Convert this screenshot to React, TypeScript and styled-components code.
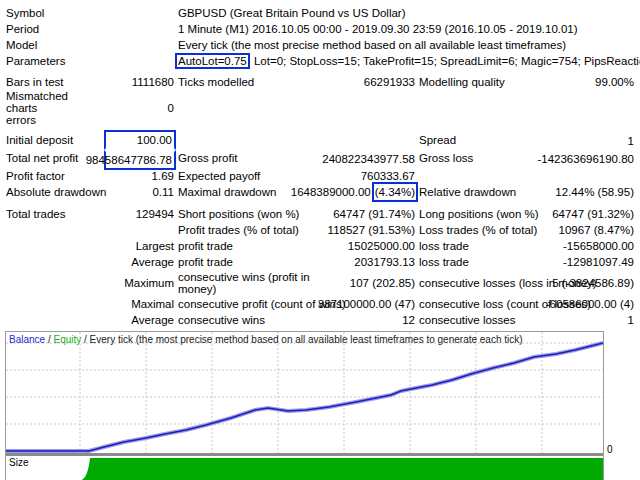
import styled, { createGlobalStyle } from 'styled-components';

const GlobalStyle = createGlobalStyle`
  body {
    margin: 0;
    background: #fff;
    font-family: 'Liberation Sans Narrow', 'Liberation Sans', sans-serif;
    font-size: 11px;
    color: #000;
  }
`;

const Page = styled.div`
  width: 640px;
  height: 480px;
  overflow: hidden;
  padding-top: 5px;
`;

const Table = styled.div<{ $mt?: number }>`
  display: grid;
  grid-template-columns: 100px 72px 150px 91px 123px 96px;
  margin-left: 4px;
  margin-top: ${({ $mt }) => $mt || 0}px;
  font-family: 'Liberation Sans Narrow', 'Liberation Sans', sans-serif;
  font-size: 11.5px;
  line-height: 16px;
`;

const Label = styled.div<{ $span?: number; $right?: boolean }>`
  grid-column: span ${({ $span }) => $span || 1};
  white-space: nowrap;
  text-align: ${({ $right }) => ($right ? 'right' : 'left')};
  padding-right: ${({ $right }) => ($right ? 2 : 0)}px;
  padding-left: ${({ $right }) => ($right ? 0 : 2)}px;
`;

const Wrap = styled.div`
  line-height: 12px;
  padding: 0 2px;
  display: flex;
  align-items: center;
  min-height: 26px;
`;

const Value = styled.div<{ $box?: 'top' | 'bottom' }>`
  text-align: right;
  white-space: nowrap;
  padding-right: 2px;
  display: flex;
  align-items: center;
  justify-content: flex-end;
  border: 2px solid ${({ $box }) => ($box ? '#0a2fd6' : 'transparent')};
  border-top-color: ${({ $box }) => ($box === 'top' ? '#0a2fd6' : 'transparent')};
  border-bottom-color: ${({ $box }) => ($box === 'bottom' ? '#0a2fd6' : 'transparent')};
  margin: ${({ $box }) => ($box === 'top' ? '-2px 0 0' : $box === 'bottom' ? '0 0 -2px' : '0')};
  border-width: ${({ $box }) => ($box ? '2px' : '0')};
`;

const Boxed = styled.span`
  border: 2px solid #0a2fd6;
  padding: 0 1px;
  margin: -2px 1px -2px -3px;
`;

const ChartWrap = styled.div`
  display: flex;
  margin: 3px 0 0 5px;
`;

const Frame = styled.div`
  width: 597px;
  border: 1px solid #9a9a9a;
  display: flex;
  flex-direction: column;
`;

const MainChart = styled.div`
  position: relative;
  height: 121px;
`;

const Legend = styled.div`
  position: absolute;
  top: 2px;
  left: 3px;
  font-size: 10px;
  font-family: 'Liberation Sans Narrow', 'Liberation Sans', sans-serif;
  color: #222;
  white-space: nowrap;
`;

const Colored = styled.span<{ $c: string }>`
  color: ${({ $c }) => $c};
`;

const Divider = styled.div`
  height: 3px;
  background: #8c8c8c;
`;

const SizePanel = styled.div`
  position: relative;
  height: 26px;
`;

const SizeLabel = styled.span`
  position: absolute;
  top: 1px;
  left: 3px;
  font-size: 10px;
  font-family: 'Liberation Sans Narrow', 'Liberation Sans', sans-serif;
`;

const Side = styled.div`
  width: 30px;
  font-size: 10px;
  font-family: 'Liberation Sans Narrow', sans-serif;
  padding: 113px 0 0 3px;
`;

const Axis = styled.div`
  display: flex;
  justify-content: space-between;
  width: 596px;
  margin: 1px 0 0 6px;
  font-size: 9px;
  letter-spacing: -0.2px;
  font-family: 'Liberation Sans Narrow', 'Liberation Sans', sans-serif;
  white-space: nowrap;
`;

const ticks = ['0', '6046', '11421', '16796', '22170', '27545', '32919', '38294', '43669', '49043', '54418', '59792', '65167', '70541', '75916', '81291', '86665', '92040', '97414', '102789', '108164', '113538', '118913', '124287', '129662'];

const linePts = '0,119 83,119 98,115 118,110 140,106 159,102 180,98 200,93 225,86 249,78 262,76 282,79 300,78 323,75 350,70 370,66 385,63 395,59 405,57 426,53 446,48 465,42 487,36 508,31 528,25 550,22 569,18 585,14 597,11';

export default function App() {
  return (
    <Page>
      <GlobalStyle />
      <Table>
        <Label $span={2}>Symbol</Label>
        <Label $span={4}>GBPUSD (Great Britain Pound vs US Dollar)</Label>
        <Label $span={2}>Period</Label>
        <Label $span={4}>1 Minute (M1) 2016.10.05 00:00 - 2019.09.30 23:59 (2016.10.05 - 2019.10.01)</Label>
        <Label $span={2}>Model</Label>
        <Label $span={4}>Every tick (the most precise method based on all available least timeframes)</Label>
        <Label $span={2}>Parameters</Label>
        <Label $span={4}>
          <Boxed>AutoLot=0.75</Boxed> Lot=0; StopLoss=15; TakeProfit=15; SpreadLimit=6; Magic=754; PipsReaction=1.2;
        </Label>
      </Table>
      <Table $mt={5}>
        <Label>Bars in test</Label>
        <Value>1111680</Value>
        <Label>Ticks modelled</Label>
        <Value>66291933</Value>
        <Label>Modelling quality</Label>
        <Value>99.00%</Value>
        <Wrap>Mismatched charts<br />errors</Wrap>
        <Value>0</Value>
        <Label $span={4} />
      </Table>
      <Table $mt={6}>
        <Label>Initial deposit</Label>
        <Value $box="top">100.00</Value>
        <Label />
        <Value />
        <Label>Spread</Label>
        <Value>1</Value>
        <Label>Total net profit</Label>
        <Value $box="bottom">98458647786.78</Value>
        <Label>Gross profit</Label>
        <Value>240822343977.58</Value>
        <Label>Gross loss</Label>
        <Value>-142363696190.80</Value>
        <Label>Profit factor</Label>
        <Value>1.69</Value>
        <Label>Expected payoff</Label>
        <Value>760333.67</Value>
        <Label $span={2} />
        <Label>Absolute drawdown</Label>
        <Value>0.11</Value>
        <Label>Maximal drawdown</Label>
        <Value>1648389000.00 <Boxed style={{ marginRight: -3, marginLeft: 1 }}>(4.34%)</Boxed></Value>
        <Label>Relative drawdown</Label>
        <Value>12.44% (58.95)</Value>
      </Table>
      <Table $mt={6}>
        <Label>Total trades</Label>
        <Value>129494</Value>
        <Label>Short positions (won %)</Label>
        <Value>64747 (91.74%)</Value>
        <Label>Long positions (won %)</Label>
        <Value>64747 (91.32%)</Value>
        <Label $span={2} />
        <Label>Profit trades (% of total)</Label>
        <Value>118527 (91.53%)</Value>
        <Label>Loss trades (% of total)</Label>
        <Value>10967 (8.47%)</Value>
        <Label />
        <Label $right>Largest</Label>
        <Label>profit trade</Label>
        <Value>15025000.00</Value>
        <Label>loss trade</Label>
        <Value>-15658000.00</Value>
        <Label />
        <Label $right>Average</Label>
        <Label>profit trade</Label>
        <Value>2031793.13</Value>
        <Label>loss trade</Label>
        <Value>-12981097.49</Value>
        <Label />
        <Label $right style={{ lineHeight: '26px' }}>Maximum</Label>
        <Wrap>consecutive wins (profit in<br />money)</Wrap>
        <Value>107 (202.85)</Value>
        <Label style={{ lineHeight: '26px' }}>consecutive losses (loss in money)</Label>
        <Value>5 (-3824586.89)</Value>
        <Label />
        <Label $right>Maximal</Label>
        <Label>consecutive profit (count of wins)</Label>
        <Value>387100000.00 (47)</Value>
        <Label>consecutive loss (count of losses)</Label>
        <Value>-60586000.00 (4)</Value>
        <Label />
        <Label $right>Average</Label>
        <Label>consecutive wins</Label>
        <Value>12</Value>
        <Label>consecutive losses</Label>
        <Value>1</Value>
      </Table>
      <ChartWrap>
        <Frame>
          <MainChart>
            <svg width="597" height="121" style={{ display: 'block' }}>
              {[11, 38, 65, 92].map((y) => (
                <line key={y} x1="0" x2="597" y1={y} y2={y} stroke="#c8c8c8" strokeDasharray="2 2" />
              ))}
              {Array.from({ length: 9 }, (_, i) => 74 + i * 66).map((x) => (
                <line key={x} x1={x} x2={x} y1="0" y2="121" stroke="#c8c8c8" strokeDasharray="2 2" />
              ))}
              <polyline points={linePts} fill="none" stroke="#9a9ae8" strokeWidth="4" />
              <polyline points={linePts} fill="none" stroke="#1d1dbf" strokeWidth="1.6" />
            </svg>
            <Legend>
              <Colored $c="#2a2acc">Balance</Colored> / <Colored $c="#19b019">Equity</Colored> / Every tick (the most precise method based on all available least timeframes to generate each tick)
            </Legend>
          </MainChart>
          <Divider />
          <SizePanel>
            <svg width="597" height="26" style={{ display: 'block' }}>
              <path d="M70,26 C78,25 82,20 84,2 L597,2 L597,26 Z" fill="#00aa00" />
            </svg>
            <SizeLabel>Size</SizeLabel>
          </SizePanel>
        </Frame>
        <Side>0</Side>
      </ChartWrap>
      <Axis>
        {ticks.map((t) => (
          <span key={t}>{t}</span>
        ))}
      </Axis>
    </Page>
  );
}
